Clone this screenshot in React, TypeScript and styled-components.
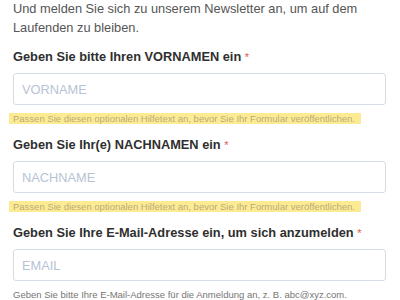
import React from "react";
import styled, { createGlobalStyle } from "styled-components";

const GlobalStyle = createGlobalStyle`
  body {
    margin: 0;
    background: #ffffff;
    font-family: "Liberation Sans", Arial, sans-serif;
  }
`;

type Field = {
  label: string;
  placeholder: string;
  help: string;
  marked: boolean;
};

const fields: Field[] = [
  {
    label: "Geben Sie bitte Ihren VORNAMEN ein",
    placeholder: "VORNAME",
    help: "Passen Sie diesen optionalen Hilfetext an, bevor Sie Ihr Formular veröffentlichen.",
    marked: true,
  },
  {
    label: "Geben Sie Ihr(e) NACHNAMEN ein",
    placeholder: "NACHNAME",
    help: "Passen Sie diesen optionalen Hilfetext an, bevor Sie Ihr Formular veröffentlichen.",
    marked: true,
  },
  {
    label: "Geben Sie Ihre E-Mail-Adresse ein, um sich anzumelden",
    placeholder: "EMAIL",
    help: "Geben Sie bitte Ihre E-Mail-Adresse für die Anmeldung an, z. B. abc@xyz.com.",
    marked: false,
  },
];

export default function App() {
  return (
    <>
      <GlobalStyle />
      <StyledForm>
        <StyledIntro>
          Und melden Sie sich zu unserem Newsletter an, um auf dem Laufenden zu
          bleiben.
        </StyledIntro>
        {fields.map((f) => (
          <StyledGroup key={f.placeholder}>
            <StyledLabel>
              {f.label} <StyledStar>*</StyledStar>
            </StyledLabel>
            <StyledInput type="text" placeholder={f.placeholder} />
            <StyledHelp $marked={f.marked}>{f.help}</StyledHelp>
          </StyledGroup>
        ))}
      </StyledForm>
    </>
  );
}

const StyledForm = styled.div`
  width: 373px;
  padding: 0 0 0 13px;
`;

const StyledIntro = styled.p`
  margin: -1px 0 10px;
  font-size: 12.8px;
  line-height: 19px;
  color: #555555;
`;

const StyledGroup = styled.div`
  display: flex;
  flex-direction: column;
  margin-bottom: 11px;
`;

const StyledLabel = styled.label`
  font-size: 12.8px;
  line-height: 20px;
  font-weight: bold;
  color: #2f2f2f;
  margin-bottom: 6px;
`;

const StyledStar = styled.span`
  color: #e4574f;
  font-weight: normal;
  font-size: 11px;
  vertical-align: top;
`;

const StyledInput = styled.input`
  box-sizing: border-box;
  width: 373px;
  height: 32px;
  border: 1.5px solid #d6dce6;
  border-radius: 3px;
  padding: 0 8px;
  font-family: "Liberation Sans", Arial, sans-serif;
  font-size: 12.8px;
  outline: none;

  &::placeholder {
    color: #b7c3d5;
  }
`;

const StyledHelp = styled.span<{ $marked: boolean }>`
  align-self: flex-start;
  white-space: nowrap;
  margin-top: 8px;
  font-size: 9.5px;
  line-height: 11px;
  color: ${(p) => (p.$marked ? "#b9ac78" : "#767676")};
  background: ${(p) => (p.$marked ? "#fdeb94" : "transparent")};
  padding: 0 6px 0 ${(p) => (p.$marked ? "4px" : "0")};
  margin-left: ${(p) => (p.$marked ? "-4px" : "0")};
`;
